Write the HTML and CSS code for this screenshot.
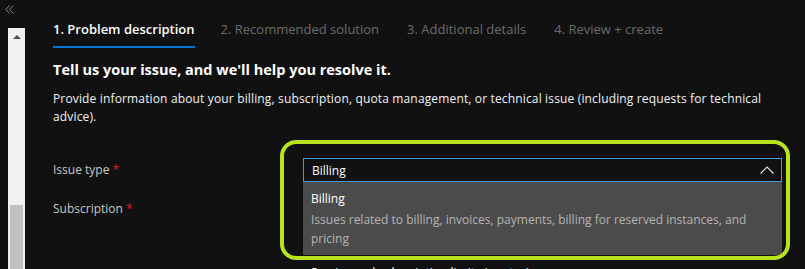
FILE: index.html
```html
<!DOCTYPE html>
<html lang="en">
<head>
  <meta charset="UTF-8">
  <title>New support request</title>
  <link rel="stylesheet" href="styles.css">
</head>
<body>
  <div class="layout">
    <!-- left rail -->
    <aside class="rail">
      <svg class="collapse" width="9" height="9" viewBox="0 0 9 9">
        <path d="M4.5 0.5 L0.8 4.5 L4.5 8.5 M8.2 0.5 L4.5 4.5 L8.2 8.5" fill="none" stroke="#8a8a8a" stroke-width="1"/>
      </svg>
      <div class="scrollbar">
        <span class="arrow"></span>
        <span class="thumb"></span>
      </div>
    </aside>

    <main class="content">
      <nav class="steps">
        <span class="step active">1. Problem description</span>
        <span class="step">2. Recommended solution</span>
        <span class="step">3. Additional details</span>
        <span class="step">4. Review + create</span>
      </nav>

      <h1>Tell us your issue, and we'll help you resolve it.</h1>
      <p class="intro">Provide information about your billing, subscription, quota management, or technical issue (including requests for technical advice).</p>

      <div class="form">
        <div class="row">
          <label>Issue type <span class="req">*</span></label>
          <div class="field">
            <div class="select">
              <span>Billing</span>
              <svg width="14" height="8" viewBox="0 0 14 8">
                <path d="M0.5 7.5 L7 1 L13.5 7.5" fill="none" stroke="#e8e8e8" stroke-width="1.1"/>
              </svg>
            </div>
            <ul class="options">
              <li class="option selected">
                <div class="opt-title">Billing</div>
                <div class="opt-desc">Issues related to billing, invoices, payments, billing for reserved instances, and pricing</div>
              </li>
              <li class="option">
                <div class="opt-title">Service and subscription limits (quotas)</div>
              </li>
            </ul>
            <div class="highlight"></div>
          </div>
        </div>
        <div class="row">
          <label>Subscription <span class="req">*</span></label>
          <div class="field"></div>
        </div>
      </div>
    </main>
  </div>
</body>
</html>
```

FILE: styles.css
```css
* {
  box-sizing: border-box;
}
html, body {
  height: 100%;
}
body {
  margin: 0;
  background-color: #111111;
  color: #ffffff;
  font-family: 'Open Sans', 'Noto Sans', sans-serif;
  font-size: 12px;
  overflow: hidden;
}
.layout {
  display: flex;
  height: 100%;
}
.rail {
  width: 53px;
  flex-shrink: 0;
  display: flex;
  flex-direction: column;
  padding: 5px 0 0 5px;
}
.collapse {
  display: block;
  margin-bottom: 14px;
}
.scrollbar {
  margin-left: 3px;
  width: 17px;
  flex: 1;
  background: #f1f1f1;
  display: flex;
  flex-direction: column;
  align-items: center;
  justify-content: space-between;
  padding-top: 7px;
}
.arrow {
  width: 0;
  height: 0;
  border-left: 4px solid transparent;
  border-right: 4px solid transparent;
  border-bottom: 4px solid #505050;
}
.thumb {
  width: 13px;
  height: 64px;
  background: #c1c1c1;
}
.content {
  flex: 1;
  padding-top: 20px;
}
.steps {
  display: flex;
  font-size: 13px;
}
.step {
  color: #6b6b6b;
  padding-bottom: 8px;
  margin-right: 28px;
}
.step.active {
  color: #ffffff;
  font-weight: 600;
  border-bottom: 2px solid #0078d4;
  margin-right: 26px;
}
h1 {
  margin: 12px 0 0;
  font-size: 14.5px;
  font-weight: 700;
  line-height: 20px;
}
.intro {
  margin: 10px 0 0;
  width: 730px;
  line-height: 18px;
  letter-spacing: 0.15px;
  color: #f2f2f2;
}
.form {
  margin-top: 32px;
}
.row {
  display: flex;
  height: 39px;
}
.row label {
  width: 250px;
  color: #c8c8c8;
  line-height: 24px;
}
.req {
  color: #e81123;
}
.field {
  position: relative;
  width: 479px;
}
.select {
  height: 24px;
  border: 1px solid #3d9be0;
  display: flex;
  align-items: center;
  justify-content: space-between;
  padding: 0 7px 0 8px;
  color: #ffffff;
}
.options {
  position: absolute;
  top: 24px;
  left: 0;
  right: 0;
  margin: 0;
  padding: 0;
  list-style: none;
  background: #111111;
  z-index: 1;
}
.option {
  padding: 7px 8px 7px;
  line-height: 19px;
}
.option.selected {
  background: #4b4b4b;
  border-bottom: 1px solid #111111;
}
.opt-title {
  color: #ffffff;
}
.selected .opt-title {
  margin-bottom: 2px;
}
.opt-desc {
  color: #b4b4b4;
  padding-right: 12px;
}
.highlight {
  position: absolute;
  left: -23px;
  top: -18px;
  width: 510px;
  height: 120px;
  border: 4px solid #b8e21c;
  border-radius: 16px;
  z-index: 2;
  pointer-events: none;
}
```
